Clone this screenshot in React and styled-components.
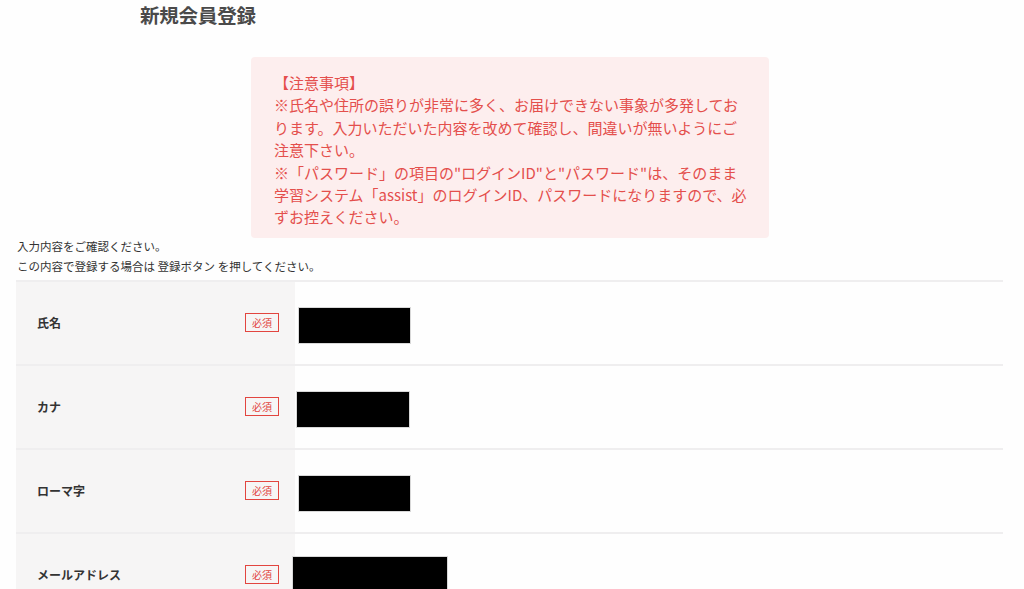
import styled, { createGlobalStyle } from "styled-components";

const GlobalStyle = createGlobalStyle`
    * { box-sizing: border-box; }
    body {
        margin: 0;
        background: #fefefe;
        font-family: "Noto Sans CJK JP", "Noto Sans", sans-serif;
        color: #333;
    }
`

const rows = [
    { label: "氏名", w: 113, h: 37, shift: 3 },
    { label: "カナ", w: 114, h: 37, shift: 1 },
    { label: "ローマ字", w: 113, h: 37, shift: 3 },
    { label: "メールアドレス", w: 156, h: 44, shift: -3 },
];

const App = () => {
    return (
        <Page>
            <GlobalStyle />
            <Title>新規会員登録</Title>
            <Notice>
                <p>【注意事項】</p>
                <p>※氏名や住所の誤りが非常に多く、お届けできない事象が多発しております。入力いただいた内容を改めて確認し、間違いが無いようにご注意下さい。</p>
                <p>※「パスワード」の項目の"ログインID"と"パスワード"は、そのまま学習システム「assist」のログインID、パスワードになりますので、必ずお控えください。</p>
            </Notice>
            <Lead>
                入力内容をご確認ください。<br />
                この内容で登録する場合は 登録ボタン を押してください。
            </Lead>
            <Table>
                {rows.map((row) => (
                    <Row key={row.label}>
                        <LabelCell>
                            <span>{row.label}</span>
                            <Badge>必須</Badge>
                        </LabelCell>
                        <ValueCell>
                            <Redacted $w={row.w} $h={row.h} $shift={row.shift} />
                        </ValueCell>
                    </Row>
                ))}
            </Table>
        </Page>
    )
}

const Page = styled.div`
    height: 589px;
    overflow: hidden;
    padding: 0 21px 0 16px;
`

const Title = styled.h1`
    margin: 0 0 0 124px;
    padding-top: 2px;
    font-size: 19.5px;
    line-height: 26px;
    font-weight: 700;
    color: #4a4a4a;
    letter-spacing: -0.2px;
`

const Notice = styled.div`
    width: 518px;
    margin: 29px 0 0 235px;
    padding: 15px 21px 9px 23px;
    background: #fdeeee;
    border-radius: 4px;
    color: #e44f4c;
    font-size: 15px;
    line-height: 22.4px;

    p {
        margin: 0;
    }
`

const Lead = styled.div`
    height: 44px;
    margin-top: -2px;
    padding-left: 1px;
    font-size: 11.5px;
    line-height: 20px;
    color: #333;
`

const Table = styled.div`
    display: flex;
    flex-direction: column;
`

const Row = styled.div`
    display: flex;
    height: 84px;
    border-top: 2px solid #efeeef;
`

const LabelCell = styled.div`
    width: 279px;
    flex-shrink: 0;
    display: flex;
    align-items: center;
    justify-content: space-between;
    padding: 0 16px 0 21px;
    background: #f6f5f5;
    font-size: 12px;
    font-weight: 700;
    color: #333;
`

const Badge = styled.span`
    display: inline-block;
    border: 1px solid #e2453f;
    color: #e2453f;
    font-size: 10px;
    font-weight: 400;
    line-height: 15px;
    padding: 1px 6px;
`

const ValueCell = styled.div`
    flex: 1;
    display: flex;
    align-items: center;
    padding-top: 6px;
`

const Redacted = styled.div`
    width: ${(p) => p.$w}px;
    height: ${(p) => p.$h}px;
    margin-left: ${(p) => p.$shift}px;
    background: #000;
    border: 1px solid #d8d8d8;
`

export default App;
